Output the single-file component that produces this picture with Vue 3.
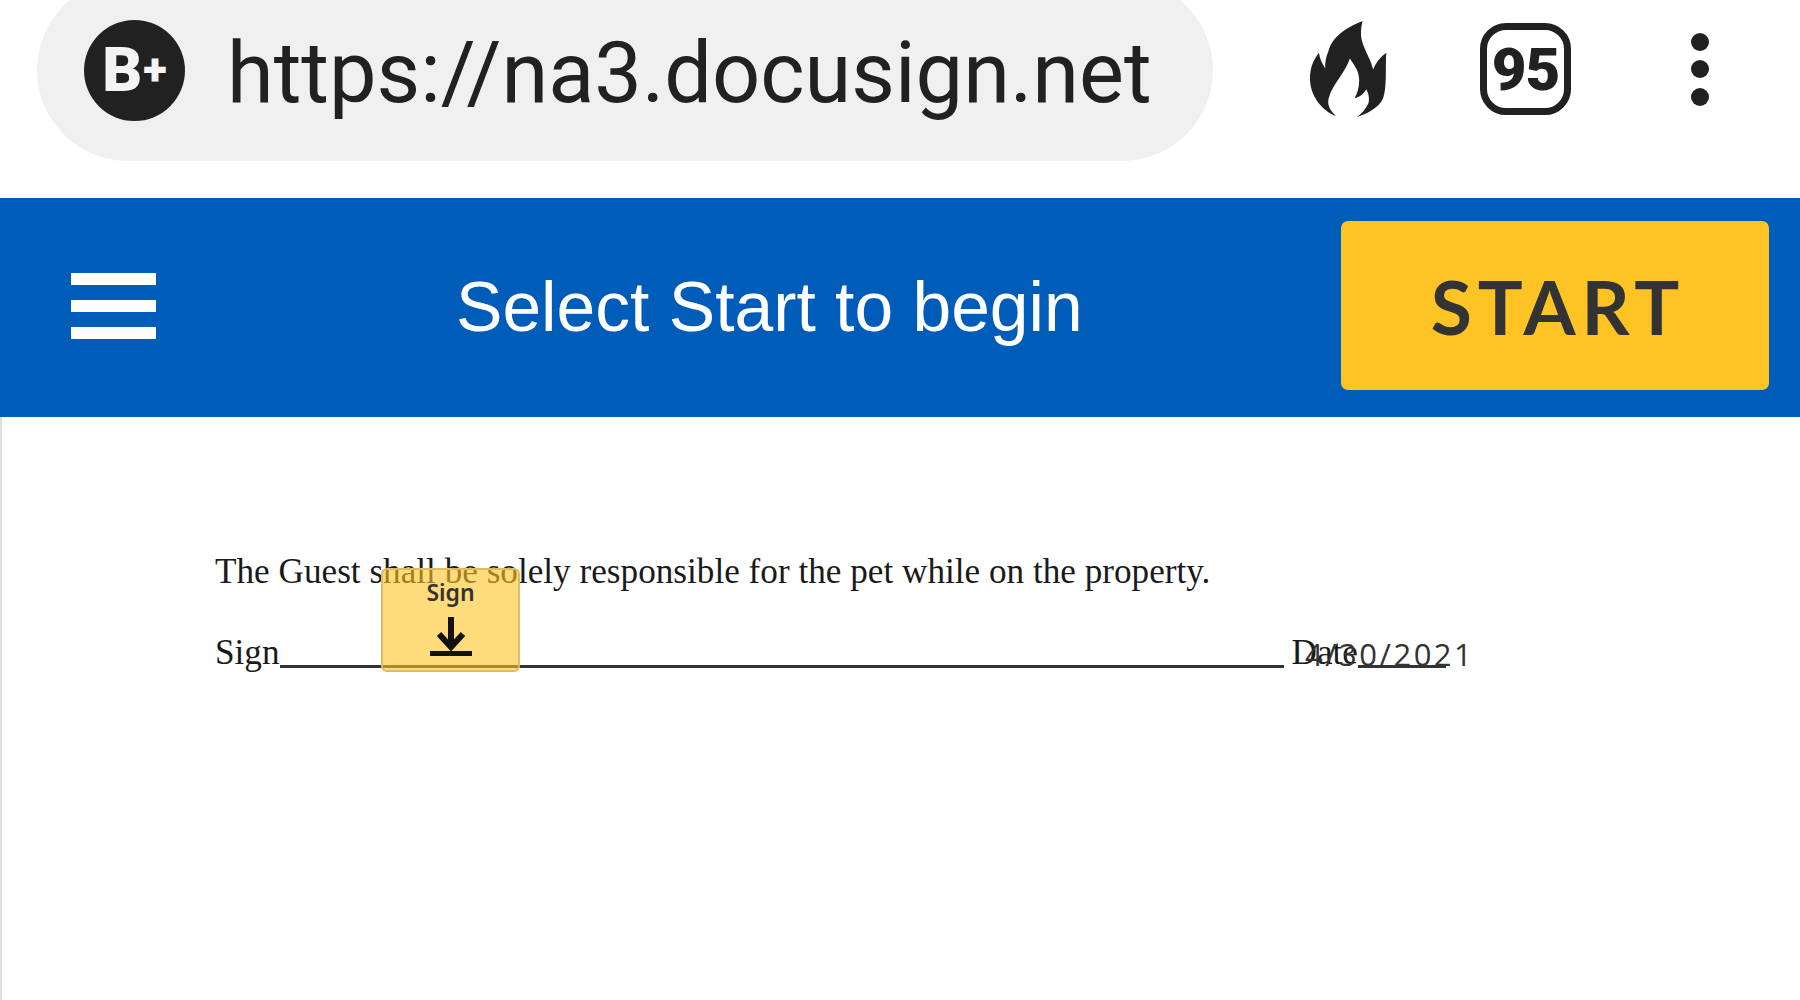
<script setup>
const url = "https://na3.docusign.net";
const sentence = "The Guest shall be solely responsible for the pet while on the property.";
</script>

<template>
  <div class="page">
    <header class="chrome">
      <div class="pill">
        <div class="grade"><span class="grade-b">B</span><span class="grade-plus">+</span></div>
        <span class="url">{{ url }}</span>
      </div>
      <div class="actions">
        <svg class="flame" viewBox="0 0 83 97" width="77" height="96" preserveAspectRatio="none">
          <path fill="#212121" d="M56.6 0C40 6 24 16 20 30C17 37 16 42 16.5 48C13 43 10.5 38 9.6 32C3 40 0 48 0 58C0 75 12 90 28 96C21 90 18 84 20.5 77C24 65 38 52 43 38C47 44 53 50 53 60C53 67 51 73 48 78C53 77 58 74 60.5 69C64 74 64 80 63 83C60 89 56 93 51 97C66 92 78 85 80 74C83 60 81 45 82.3 32C76 36 71 42 68 49C66 40 60 32 56.6 22C54 14 55 7 56.6 0Z" />
        </svg>
        <div class="tabs">95</div>
        <div class="dots"><i></i><i></i><i></i></div>
      </div>
    </header>

    <div class="bar">
      <div class="burger"><i></i><i></i><i></i></div>
      <div class="title">Select Start to begin</div>
      <div class="start">START</div>
    </div>

    <main class="doc">
      <div class="sheet">
        <p class="line">{{ sentence }}</p>
        <div class="line sign-row">
          <span>Sign</span>
          <span class="rule rule-sign"></span>
          <span class="date-label">Date</span>
          <span class="rule rule-date"></span>
        </div>

        <div class="tag">
          <span class="tag-label">Sign</span>
          <svg class="tag-icon" viewBox="0 0 42 42" width="42" height="42">
            <path d="M21 1V31M9 18L21 31L33 18" fill="none" stroke="#111" stroke-width="6" />
            <rect x="0" y="35" width="42" height="5" fill="#111" />
          </svg>
        </div>
        <div class="date-value">4/30/2021</div>
      </div>
    </main>
  </div>
</template>

<style>
html,
body {
  margin: 0;
  background: #fff;
}
</style>

<style scoped>
.page {
  width: 1800px;
  height: 1000px;
  overflow: hidden;
  background: #fff;
}

.chrome {
  height: 198px;
  display: flex;
  align-items: flex-start;
  overflow: hidden;
  color: #212121;
}

.pill {
  box-sizing: border-box;
  width: 1176px;
  height: 182px;
  margin: -21px 0 0 37px;
  padding-left: 47px;
  border-radius: 91px;
  background: #f0f0f0;
  display: flex;
  align-items: center;
  gap: 42px;
}

.grade {
  width: 101px;
  height: 101px;
  border-radius: 50%;
  background: #212121;
  color: #f4f4f4;
  display: flex;
  align-items: center;
  justify-content: center;
  font-family: Roboto, sans-serif;
  font-weight: 900;
}

.grade-b {
  font-size: 62px;
  line-height: 1;
}

.grade-plus {
  font-size: 44px;
  line-height: 1;
  margin-left: 1px;
}

.url {
  padding-top: 7px;
  font-family: Roboto, sans-serif;
  font-size: 84.7px;
  line-height: 1;
  white-space: nowrap;
}

.actions {
  height: 138px;
  margin-left: 97px;
  display: flex;
  align-items: center;
}

.tabs {
  box-sizing: border-box;
  width: 91px;
  height: 92px;
  margin-left: 93px;
  border: 7px solid #212121;
  border-radius: 26px;
  display: flex;
  align-items: center;
  justify-content: center;
  font-family: Roboto, sans-serif;
  font-size: 60px;
  font-weight: 900;
  letter-spacing: -1px;
}

.dots {
  margin-left: 120px;
  display: flex;
  flex-direction: column;
  gap: 9.5px;
}

.dots i {
  display: block;
  width: 18px;
  height: 18px;
  border-radius: 50%;
  background: #212121;
}

.bar {
  box-sizing: border-box;
  height: 219px;
  padding: 23px 31px 27px 71px;
  background: #005cb9;
  display: flex;
  align-items: center;
}

.burger {
  width: 85px;
  display: flex;
  flex-direction: column;
  gap: 15px;
}

.burger i {
  display: block;
  height: 12px;
  background: #fff;
}

.title {
  flex: 1;
  padding: 2px 0 0 300px;
  color: #fff;
  font-family: "Liberation Sans", sans-serif;
  font-size: 69.6px;
  white-space: nowrap;
}

.start {
  box-sizing: border-box;
  width: 428px;
  height: 169px;
  padding-left: 6px;
  border-radius: 7px;
  background: #ffc423;
  color: #333;
  display: flex;
  align-items: center;
  justify-content: center;
  font-family: Lato, sans-serif;
  font-size: 75px;
  font-weight: 700;
  letter-spacing: 6px;
}

.doc {
  height: 583px;
  border-left: 2px solid #ddd;
}

.sheet {
  position: relative;
  padding: 115px 0 0 213px;
  font-family: "Liberation Serif", serif;
  font-size: 35.2px;
  color: #1a1a1a;
}

.line {
  margin: 0;
  height: 81px;
  line-height: 80px;
  white-space: nowrap;
}

.sign-row {
  display: flex;
  align-items: flex-start;
}

.rule {
  display: block;
  height: 3px;
  margin-top: 52px;
  background: #333;
}

.rule-sign {
  width: 1004px;
}

.date-label {
  margin-left: 8px;
}

.rule-date {
  width: 88px;
}

.tag {
  position: absolute;
  left: 379px;
  top: 151px;
  box-sizing: border-box;
  width: 139px;
  height: 104px;
  padding-top: 7px;
  border: 2px solid #dcbc66;
  border-radius: 6px;
  background: rgba(255, 196, 35, 0.6);
  display: flex;
  flex-direction: column;
  align-items: center;
  font-family: "Noto Sans", sans-serif;
  font-size: 23px;
  font-weight: 600;
  color: #333;
}

.tag-label {
  line-height: 30px;
}

.tag-icon {
  margin-top: 9px;
}

.date-value {
  position: absolute;
  left: 1303px;
  top: 217px;
  font-family: "Open Sans", sans-serif;
  font-size: 31px;
  line-height: 40px;
  letter-spacing: 2.5px;
  color: #333;
}
</style>
